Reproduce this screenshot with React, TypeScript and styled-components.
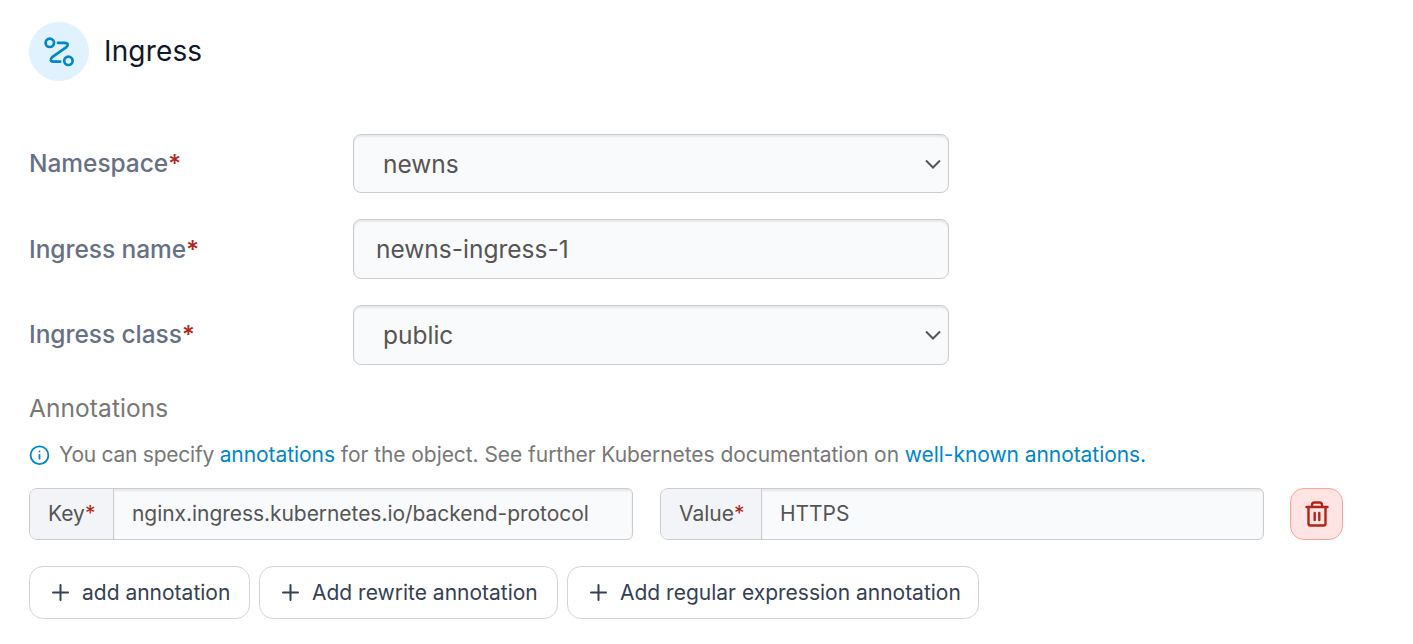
import React from 'react';
import styled, { createGlobalStyle } from 'styled-components';

const GlobalStyle = createGlobalStyle`
  * { box-sizing: border-box; }
  body {
    margin: 0;
    background: #fff;
    font-family: Inter, 'Liberation Sans', sans-serif;
    font-weight: 400;
    color: #555;
  }
`;

const Page = styled.main`
  height: 644px;
  padding: 22px 29px 0;
  overflow: hidden;
`;

const Header = styled.header`
  display: flex;
  align-items: center;
  gap: 15px;
  height: 59px;
  margin-bottom: 53px;
`;

const Badge = styled.span`
  display: flex;
  align-items: center;
  justify-content: center;
  width: 60px;
  height: 59px;
  border-radius: 50%;
  background: #e0f2fe;
  color: #0086c9;
`;

const Title = styled.h1`
  margin: 0;
  font-size: 28px;
  font-weight: 400;
  line-height: 34px;
  letter-spacing: 0.15px;
  padding-bottom: 1px;
  color: #101828;
`;

const FormRow = styled.div<{ $height: number; $gap: number }>`
  display: flex;
  align-items: center;
  height: ${(p) => p.$height}px;
  margin-bottom: ${(p) => p.$gap}px;
`;

const Label = styled.label<{ $lift?: boolean }>`
  width: 324px;
  padding-bottom: ${(p) => (p.$lift ? 2 : 0)}px;
  font-size: 24.5px;
  font-weight: 500;
  line-height: 32px;
  letter-spacing: -0.05px;
  color: #667085;
`;

const Required = styled.span`
  color: #b42318;
`;

const Control = styled.div<{ $select?: boolean }>`
  display: flex;
  align-items: center;
  justify-content: space-between;
  width: 596px;
  height: 100%;
  padding: 0 7px 0 ${(p) => (p.$select ? 29 : 22)}px;
  border: 1px solid #ccc;
  border-radius: 8px;
  background: #f9fafb;
  box-shadow: inset 0 2px 2px rgba(0, 0, 0, 0.075);
  font-size: 24.5px;
  line-height: 32px;
`;

const SectionTitle = styled.h2`
  margin: 0 0 14px;
  font-size: 24.5px;
  font-weight: 400;
  line-height: 34px;
  letter-spacing: 0.08px;
  color: #777;
`;

const Hint = styled.p`
  display: flex;
  align-items: center;
  gap: 9px;
  margin: 0 0 19px;
  font-size: 21px;
  line-height: 30px;
  letter-spacing: -0.06px;
  color: #777;

  > svg {
    flex: none;
  }

  > span {
    padding-top: 1px;
    line-height: 29px;
  }
`;

const Lead = styled.span`
  letter-spacing: -0.25px;
`;

const Link = styled.a`
  color: #0086c9;
`;

const Annotation = styled.div`
  display: flex;
  height: 52px;
  margin-bottom: 26px;
`;

const Group = styled.div<{ $width: number; $gap: number }>`
  display: flex;
  width: ${(p) => p.$width}px;
  margin-right: ${(p) => p.$gap}px;
  border: 1px solid #ccc;
  border-radius: 8px 6px 6px 8px;
  background: #f9fafb;
  font-size: 21px;
  line-height: 28px;
  overflow: hidden;
`;

const Addon = styled.span<{ $width: number }>`
  display: flex;
  align-items: center;
  width: ${(p) => p.$width}px;
  padding-left: 18px;
  border-right: 1px solid #ccc;
  background: #f2f4f7;
`;

const GroupValue = styled.span`
  display: flex;
  flex: 1;
  align-items: center;
  padding-left: 18px;
  letter-spacing: -0.05px;
  box-shadow: inset 0 2px 2px rgba(0, 0, 0, 0.075);
`;

const DeleteButton = styled.button`
  display: flex;
  align-items: center;
  justify-content: center;
  width: 53px;
  height: 52px;
  padding: 0;
  border: 1px solid #fda29b;
  border-radius: 14px;
  background: #fee4e2;
  color: #b42318;
`;

const Actions = styled.div`
  display: flex;
  gap: 9px;
`;

const ActionButton = styled.button<{ $width: number }>`
  display: flex;
  align-items: center;
  gap: 13px;
  width: ${(p) => p.$width}px;
  height: 53px;
  padding: 0 0 0 22px;
  border: 1px solid #d0d5dd;
  border-radius: 14px;
  background: #fff;
  color: #344054;
  font-family: inherit;
  font-size: 21px;
  font-weight: 400;
  line-height: 28px;
  white-space: nowrap;
`;

const Chevron = () => (
  <svg width="16" height="10" viewBox="0 0 16 10" fill="none" stroke="#555" strokeWidth="2">
    <path d="M1 1.5 8 8.5 15 1.5" />
  </svg>
);

const Plus = () => (
  <svg width="17" height="17" viewBox="0 0 17 17" fill="none" stroke="currentColor" strokeWidth="2" strokeLinecap="round">
    <path d="M8.5 1v15M1 8.5h15" />
  </svg>
);

const RouteIcon = () => (
  <svg width="30" height="30" viewBox="0 0 30 30" fill="none" stroke="currentColor" strokeWidth="2.7" strokeLinecap="round" strokeLinejoin="round">
    <circle cx="5.8" cy="5.8" r="4.2" />
    <circle cx="24.4" cy="23.8" r="4.2" />
    <path d="M14 5.8h6.600c3.500 0 4 2.400 1.800 4.300L8.200 20.200c-2.600 2.200-1.700 4.400 1.200 4.400h6.800" />
  </svg>
);

const InfoIcon = () => (
  <svg width="21" height="21" viewBox="0 0 21 21" fill="none" stroke="#0086c9" strokeWidth="1.8" strokeLinecap="round">
    <circle cx="10.5" cy="11.2" r="8.9" />
    <path d="M10.5 10.8v4M10.5 7.5v.1" />
  </svg>
);

const TrashIcon = () => (
  <svg width="26" height="26" viewBox="0 0 26 26" fill="none" stroke="currentColor" strokeWidth="2.4" strokeLinecap="round" strokeLinejoin="round">
    <path d="M2.500 6h21M4.500 6v16.500a2 2 0 0 0 2 2h13a2 2 0 0 0 2-2V6M8 6V4a2.500 2.500 0 0 1 2.500-2.500h5A2.500 2.500 0 0 1 18 4v2M10.700 12v7M15.300 12v7" />
  </svg>
);

export default function App() {
  return (
    <>
      <GlobalStyle />
      <Page>
        <Header>
          <Badge><RouteIcon /></Badge>
          <Title>Ingress</Title>
        </Header>
        <FormRow $height={59} $gap={26}>
          <Label $lift>Namespace<Required>*</Required></Label>
          <Control $select><span>newns</span><Chevron /></Control>
        </FormRow>
        <FormRow $height={60} $gap={26}>
          <Label>Ingress name<Required>*</Required></Label>
          <Control><span>newns-ingress-1</span></Control>
        </FormRow>
        <FormRow $height={60} $gap={26}>
          <Label $lift>Ingress class<Required>*</Required></Label>
          <Control $select><span>public</span><Chevron /></Control>
        </FormRow>
        <SectionTitle>Annotations</SectionTitle>
        <Hint>
          <InfoIcon />
          <span>
            <Lead>You can specify </Lead><Link>annotations</Link> for the object. See further Kubernetes documentation on{' '}
            <Link>well-known annotations.</Link>
          </span>
        </Hint>
        <Annotation>
          <Group $width={604} $gap={27}>
            <Addon $width={84}>Key<Required>*</Required></Addon>
            <GroupValue>nginx.ingress.kubernetes.io/backend-protocol</GroupValue>
          </Group>
          <Group $width={604} $gap={26}>
            <Addon $width={101}>Value<Required>*</Required></Addon>
            <GroupValue>HTTPS</GroupValue>
          </Group>
          <DeleteButton aria-label="Delete annotation"><TrashIcon /></DeleteButton>
        </Annotation>
        <Actions>
          <ActionButton $width={221}><Plus />add annotation</ActionButton>
          <ActionButton $width={299}><Plus />Add rewrite annotation</ActionButton>
          <ActionButton $width={412}><Plus />Add regular expression annotation</ActionButton>
        </Actions>
      </Page>
    </>
  );
}
